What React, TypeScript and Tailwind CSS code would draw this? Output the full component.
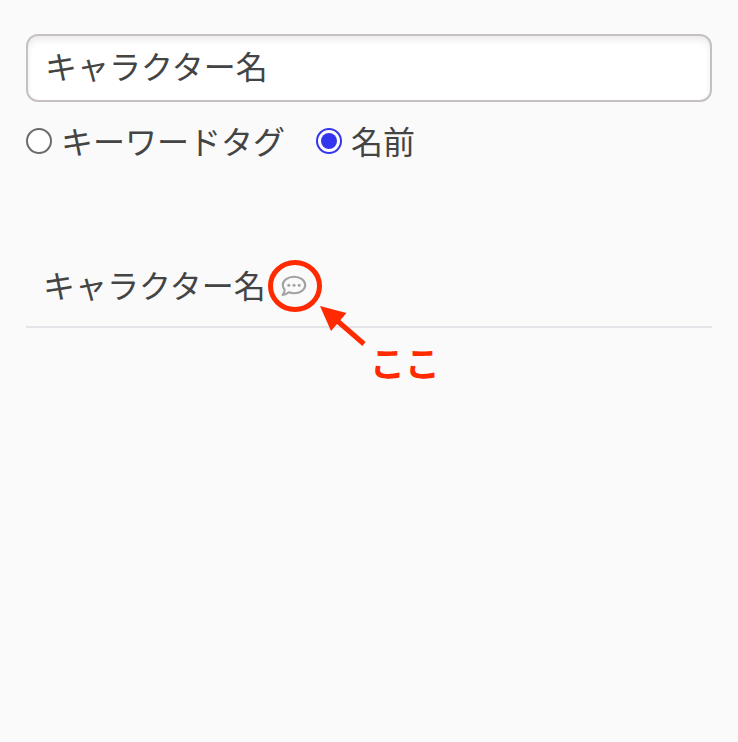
import { useState } from "react";

function Radio({ checked, label, onSelect }: { checked: boolean; label: string; onSelect: () => void }) {
  return (
    <label className="flex items-center">
      <input type="radio" name="mode" className="peer sr-only" checked={checked} onChange={onSelect} />
      <span
        className={
          checked
            ? "flex size-[26px] items-center justify-center rounded-full border-2 border-[#3535ee] bg-white"
            : "flex size-[26px] items-center justify-center rounded-full border-2 border-[#6b6b6b] bg-white"
        }
      >
        {checked && <span className="size-4 rounded-full bg-[#3535ee]" />}
      </span>
      <span className="ml-[9px] pb-[3px]">{label}</span>
    </label>
  );
}

function CommentIcon() {
  return (
    <svg className="block h-6 w-7" viewBox="0 0 28 24" fill="none">
      <path
        d="M4.700 15.700C3.400 14.400 2.800 12.800 2.800 11C2.800 6.400 7.800 2.800 14 2.800S25.200 6.400 25.200 11S20.200 19.200 14 19.200C12.100 19.200 10.400 18.900 8.800 18.300C7.100 19.800 5.100 20.800 2.600 21C3.800 19.600 4.700 17.700 4.700 15.700Z"
        stroke="#a2a2a6"
        strokeWidth="2.1"
        strokeLinejoin="round"
      />
      <g fill="#a2a2a6">
        <circle cx="8.8" cy="11.2" r="1.5" />
        <circle cx="14" cy="11.2" r="1.5" />
        <circle cx="19.2" cy="11.2" r="1.5" />
      </g>
    </svg>
  );
}

export default function App() {
  const [mode, setMode] = useState("name");
  const [query, setQuery] = useState("キャラクター名");
  return (
    <main className="min-h-[742px] bg-[#fafafa] px-[26px] pt-[34px] font-['Noto_Sans_CJK_JP',sans-serif] text-[32px] leading-[48px] text-[#444]">
      <input
        className="block h-[68px] w-full rounded-xl border-2 border-[#c6c0c1] bg-white px-[17px] pb-[6px] shadow-[inset_0_4px_6px_rgba(0,0,0,0.08)] outline-none"
        value={query}
        onChange={(e) => setQuery(e.target.value)}
      />
      <div className="mt-[15px] flex h-12 items-center gap-[31px]">
        <Radio checked={mode === "tag"} label="キーワードタグ" onSelect={() => setMode("tag")} />
        <Radio checked={mode === "name"} label="名前" onSelect={() => setMode("name")} />
      </div>
      <div className="relative mt-[81px] flex h-[82px] items-center border-b-2 border-[#e5e5e9] pl-[17px]">
        <span className="pb-[5px]">キャラクター名</span>
        <span className="ml-[14px]">
          <CommentIcon />
        </span>
        <svg className="absolute top-[12px] left-[240px] h-[92px] w-[102px]" viewBox="0 0 102 92" fill="none">
          <ellipse cx="29" cy="28" rx="24.5" ry="23.5" stroke="#ff2a00" strokeWidth="5" />
          <path d="M68 60L98 86" stroke="#ff2a00" strokeWidth="5" />
          <path d="M54 48L80.500 55L65 73Z" fill="#ff2a00" />
        </svg>
        <span className="absolute top-[92px] left-[344px] text-[35px] leading-[48px] font-bold text-[#ff2a00]">ここ</span>
      </div>
    </main>
  );
}
